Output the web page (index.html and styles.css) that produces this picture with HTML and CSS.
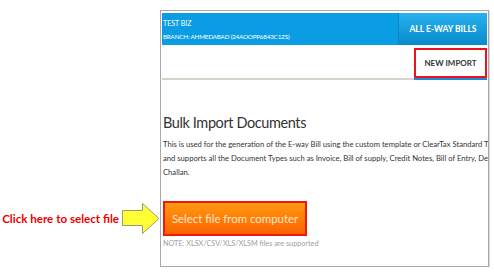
FILE: index.html
```html
<!doctype html>
<html><head>
<meta charset="utf-8">
<title>Bulk Import Documents</title>
<link rel="stylesheet" href="styles.css">
</head><body>
<div class="stage">
	<div class="callout">
		<span class="callout-text">Click here to select file</span>
		<svg class="arrow" width="38" height="31" viewBox="0 0 38 31">
			<path d="M0.5 7.5 H20.5 V0.5 L37 15.5 L20.5 30.5 V22.5 H0.5 Z" fill="#ffff33" stroke="#9a9a6a" stroke-width="1"/>
		</svg>
	</div>
	<div class="shot">
		<div class="topbar">
			<div class="biz">
				<div class="biz-name">TEST BIZ</div>
				<div class="biz-branch">BRANCH: AHMEDABAD (24AOOPP6843C1ZS)</div>
			</div>
			<a class="tab-all">ALL E-WAY BILLS</a>
		</div>
		<div class="subbar">
			<a class="tab-new">NEW IMPORT</a>
		</div>
		<div class="content">
			<h2>Bulk Import Documents</h2>
			<p class="lead">This is used for the generation of the E-way Bill using the custom template or ClearTax Standard T<br>and supports all the Document Types such as Invoice, Bill of supply, Credit Notes, Bill of Entry, De<br>Challan.</p>
			<button class="select">Select file from computer</button>
			<p class="note">NOTE: XLSX/CSV/XLS/XLSM files are supported</p>
		</div>
	</div>
</div>
</body></html>
```

FILE: styles.css
```css
body {
	margin: 0;
	background: #fff;
	font-family: Lato, 'Open Sans', sans-serif;
}

.stage {
	display: flex;
	padding-top: 10px;
}

.callout {
	width: 160px;
	height: 31px;
	margin-top: 193px;
	display: flex;
	align-items: center;
	justify-content: flex-end;
}

.callout-text {
	color: #ee0000;
	font: bold 11.6px Lato, sans-serif;
	white-space: nowrap;
	margin-right: 3px;
}

.arrow {
	display: block;
	flex-shrink: 0;
}

.shot {
	width: 325px;
	height: 253px;
	padding: 2px 1px 0 1px;
	border: 1px solid #a8a8a8;
	box-shadow: 1px 1px 0 #d8d8d8;
	overflow: hidden;
}

.topbar {
	display: flex;
	height: 32px;
	background: #0b9de4;
	color: #fff;
}

.biz {
	flex: 1;
	padding: 5px 0 0 1px;
}

.biz-name {
	font-size: 7px;
	line-height: 10px;
}

.biz-branch {
	font-size: 6.3px;
	line-height: 10px;
	margin-top: 4px;
	letter-spacing: -0.2px;
}

.tab-all {
	width: 88px;
	display: flex;
	align-items: center;
	justify-content: center;
	font-size: 8.5px;
	font-weight: bold;
	background: linear-gradient(#27b2ee, #0a8acc);
	border-left: 1px solid #0a86c6;
}

.subbar {
	display: flex;
	justify-content: flex-end;
	height: 33px;
	border-bottom: 2px solid #d9d2ca;
}

.tab-new {
	width: 69px;
	height: 26px;
	margin-top: 3px;
	border: 2px solid #e8141e;
	display: flex;
	align-items: center;
	justify-content: center;
	font-size: 8px;
	font-weight: bold;
	color: #333;
	box-shadow: 0 2px 0 #1a8ad6;
}

.content {
	padding-left: 1px;
}

h2 {
	margin: 33px 0 4px;
	font-size: 14.5px;
	line-height: 20px;
	font-weight: normal;
	letter-spacing: -0.4px;
	color: #333;
}

.lead {
	margin: 0;
	font-size: 7.65px;
	line-height: 14px;
	color: #333;
	white-space: nowrap;
}

.select {
	display: block;
	margin-top: 22px;
	width: 144px;
	height: 35px;
	padding: 0;
	border: 2px solid #f2180c;
	background: linear-gradient(#ff9a10, #ff6200);
	color: #ffe6cc;
	font: 11.4px Lato, sans-serif;
}

.note {
	margin: 2px 0 0;
	font-size: 7.25px;
	line-height: 12px;
	color: #a0a0a0;
}
```
